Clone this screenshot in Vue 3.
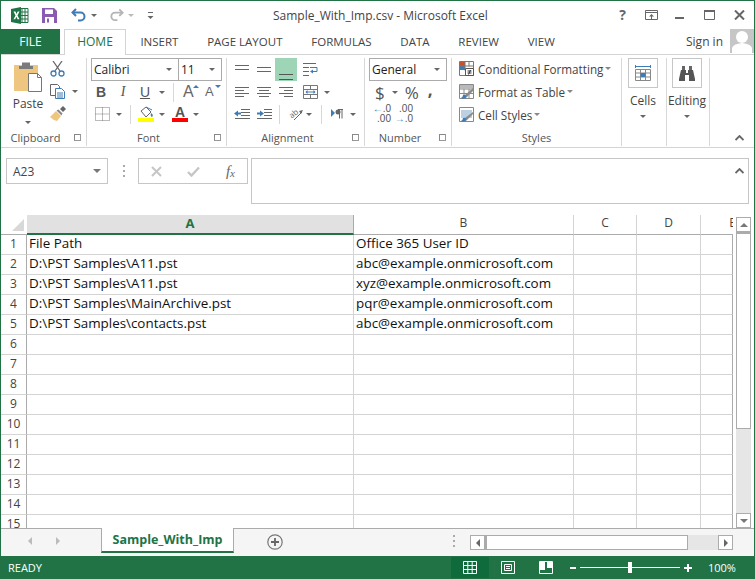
<script setup>
const tabs = ['INSERT', 'PAGE LAYOUT', 'FORMULAS', 'DATA', 'REVIEW', 'VIEW']
const columns = [
  { name: 'A', width: 327, active: true },
  { name: 'B', width: 220 },
  { name: 'C', width: 63 },
  { name: 'D', width: 64 },
  { name: 'E', width: 64 }
]
const data = [
  ['File Path', 'Office 365 User ID'],
  ['D:\\PST Samples\\A11.pst', 'abc@example.onmicrosoft.com'],
  ['D:\\PST Samples\\A11.pst', 'xyz@example.onmicrosoft.com'],
  ['D:\\PST Samples\\MainArchive.pst', 'pqr@example.onmicrosoft.com'],
  ['D:\\PST Samples\\contacts.pst', 'abc@example.onmicrosoft.com']
]
const rows = Array.from({ length: 15 }, (_, i) => ({ num: i + 1, cells: data[i] || ['', ''] }))
</script>

<template>
  <div class="window">
    <!-- title bar -->
    <div class="titlebar">
      <div class="qat">
        <svg class="qi" style="margin-left:10px" width="18" height="17" viewBox="0 0 18 17">
          <path d="M8 1.500h9v14H8z" fill="#fff" stroke="#217346"/>
          <path d="M11 1v15M14 1v15M8 5h9M8 8.500h9M8 12h9" stroke="#217346" fill="none"/>
          <path d="M0 2l10-2v17L0 15z" fill="#217346"/>
          <path d="M2.500 4.500h2l1 2.500 1.200-2.500h1.800L6.500 8.500l2 3.800H6.600L5.400 9.700 4.200 12.300H2.500l2-3.800z" fill="#fff"/>
        </svg>
        <svg class="qi" style="margin-left:13px" width="15" height="15" viewBox="0 0 15 15">
          <path d="M0 0h12l3 3v12H0z" fill="#8a5bb0"/>
          <path d="M3 1.500h8v4.500H3z" fill="#fff"/>
          <path d="M3 9h9v6H3z" fill="#fff"/>
          <path d="M5 10.500h2v4H5z" fill="#8a5bb0"/>
        </svg>
        <svg class="qi" style="margin-left:14px" width="16" height="14" viewBox="0 0 16 14">
          <path d="M5 1L1.500 4.500 5 8" fill="none" stroke="#3f7cb5" stroke-width="2"/>
          <path d="M2 4.500h7.500a4 4 0 0 1 0 8H7" fill="none" stroke="#3f7cb5" stroke-width="2"/>
        </svg>
        <span class="caret dark" style="margin-left:4px"></span>
        <svg class="qi" style="margin-left:12px" width="15" height="14" viewBox="0 0 16 14">
          <path d="M11 1l3.500 3.500L11 8" fill="none" stroke="#b4b4b4" stroke-width="2"/>
          <path d="M14 4.500H6.500a4 4 0 0 0 0 8H9" fill="none" stroke="#b4b4b4" stroke-width="2"/>
        </svg>
        <span class="caret light" style="margin-left:4px"></span>
        <svg class="qi" style="margin-left:13px" width="7" height="9" viewBox="0 0 7 9">
          <path d="M1 1.500h5" stroke="#666" fill="none"/>
          <path d="M0.500 5h6L3.500 8z" fill="#666"/>
        </svg>
      </div>
      <div class="doc-title">Sample_With_Imp.csv - Microsoft Excel</div>
      <div class="win-controls">
        <span class="help">?</span>
        <svg style="margin-right:-2px" width="13" height="10" viewBox="0 0 13 10">
          <path d="M.5.500h12v9H.5z" fill="none" stroke="#666"/>
          <path d="M.5 2.500h12" stroke="#666"/>
          <path d="M6.500 4L4 6.500h2V9h1V6.500h2z" fill="#666"/>
        </svg>
        <svg width="10" height="10" viewBox="0 0 10 10"><path d="M0 7h9v2H0z" fill="#666"/></svg>
        <svg width="11" height="10" viewBox="0 0 11 10"><path d="M.5 1.500h10v8H.5z" fill="none" stroke="#666"/><path d="M0 0h11v2H0z" fill="#666"/></svg>
        <svg width="11" height="10" viewBox="0 0 11 10"><path d="M1 .5l9 9M10 .5l-9 9" stroke="#666" stroke-width="2" fill="none"/></svg>
      </div>
    </div>

    <!-- tabs -->
    <div class="tabbar">
      <div class="file-tab">FILE</div>
      <div class="home-tab">HOME</div>
      <div class="tab" v-for="t in tabs" :key="t">{{ t }}</div>
      <div class="signin">Sign in</div>
      <div class="avatar">
        <svg width="24" height="24" viewBox="0 0 24 24">
          <circle cx="12" cy="8" r="6" fill="#fff"/>
          <path d="M2 24v-5q1-4 10-5q9 1 10 5v5z" fill="#fff"/>
        </svg>
      </div>
    </div>

    <!-- ribbon -->
    <div class="ribbon">
      <section class="group" style="width:86px">
        <div class="clip-body">
          <div class="paste">
            <svg width="30" height="31" viewBox="0 0 30 31">
              <path d="M1 4h24v26H1z" fill="#eec67f"/>
              <path d="M9 1.500h8V5h3v3H6V5h3z" fill="#7b7b7b"/>
              <path d="M15.500 12.500h9l4 4v14h-13z" fill="#fff" stroke="#777"/>
              <path d="M24.500 12.500v4h4" fill="none" stroke="#777"/>
            </svg>
            <div class="big-label">Paste</div>
            <span class="caret dark"></span>
          </div>
          <div class="clip-tools">
            <svg width="15" height="16" viewBox="0 0 15 16">
              <path d="M3 0l7 10M12 0L5 10" stroke="#666" fill="none" stroke-width="1.300"/>
              <circle cx="3.500" cy="12.500" r="2.500" fill="none" stroke="#3f7cb5" stroke-width="1.300"/>
              <circle cx="11.500" cy="12.500" r="2.500" fill="none" stroke="#3f7cb5" stroke-width="1.300"/>
            </svg>
            <div class="row-inline">
              <svg width="15" height="15" viewBox="0 0 15 15">
                <path d="M.5.500h7l2 2v9H.5z" fill="#fff" stroke="#666"/>
                <path d="M5.500 4.500h6l3 3v7h-9z" fill="#fff" stroke="#3f7cb5"/>
                <path d="M7 9h6M7 11h6M7 13h6" stroke="#3f7cb5"/>
              </svg>
              <span class="caret dark" style="margin-left:7px"></span>
            </div>
            <svg width="16" height="15" viewBox="0 0 16 15">
              <path d="M0 11l6-6 5 5-4 5q-4-1-7-4z" fill="#eec67f"/>
              <path d="M6.500 4.500l2-1 4 4-1 2z" fill="#888"/>
              <path d="M10 3l3-3 3 3-3 3z" fill="#666"/>
            </svg>
          </div>
        </div>
        <div class="group-label">Clipboard<span class="launcher"></span></div>
      </section>

      <section class="group" style="width:140px">
        <div class="font-body">
          <div class="combo-row">
            <div class="combo" style="width:88px">Calibri<span class="caret dark"></span></div>
            <div class="combo" style="width:44px;margin-left:-1px">11<span class="caret dark"></span></div>
          </div>
          <div class="tool-row">
            <b class="fmt" style="margin-left:4px;width:12px">B</b>
            <i class="fmt serif" style="margin-left:10px;width:12px">I</i>
            <u class="fmt" style="margin-left:10px;width:12px">U</u>
            <span class="caret dark" style="margin-left:8px"></span>
            <span class="vsep" style="margin-left:8px"></span>
            <span class="grow-a" style="margin-left:9px">A<span class="tri-up"></span></span>
            <span class="shrink-a" style="margin-left:10px">A<span class="tri-down"></span></span>
          </div>
          <div class="tool-row">
            <svg style="margin-left:4px" width="15" height="14" viewBox="0 0 15 14">
              <path d="M.5.500h14v13H.5zM7.500.500v13M.5 7h14" fill="none" stroke="#777" stroke-dasharray="1 1"/>
            </svg>
            <span class="caret dark" style="margin-left:6px"></span>
            <span class="vsep" style="margin-left:8px"></span>
            <div class="color-btn" style="margin-left:7px">
              <svg width="16" height="12" viewBox="0 0 16 12">
                <path d="M3 5l5-4 5 5-5 5z" fill="#fff" stroke="#666"/>
                <path d="M13 7q3 2 1 4q-2-1-1-4z" fill="#3f7cb5"/>
                <path d="M8 1l6 3" stroke="#3f7cb5"/>
              </svg>
              <span class="swatch" style="background:#ffff00"></span>
            </div>
            <span class="caret dark" style="margin-left:5px"></span>
            <div class="color-btn" style="margin-left:7px">
              <span class="font-a">A</span>
              <span class="swatch" style="background:#ff0000"></span>
            </div>
            <span class="caret dark" style="margin-left:5px"></span>
          </div>
        </div>
        <div class="group-label">Font<span class="launcher"></span></div>
      </section>

      <section class="group" style="width:138px">
        <div class="align-body">
          <div class="tool-row top">
            <svg style="margin-left:7px" width="16" height="12" viewBox="0 0 16 12"><path d="M1 1.500h14M1 5.500h14" stroke="#666"/></svg>
            <svg style="margin-left:6px" width="16" height="12" viewBox="0 0 16 12"><path d="M1 3.500h14M1 7.500h14" stroke="#666"/></svg>
            <span class="al-active"><svg width="16" height="12" viewBox="0 0 16 12"><path d="M1 5.500h14M1 10.500h14" stroke="#555"/></svg></span>
            <svg style="margin-left:5px" width="16" height="16" viewBox="0 0 16 16">
              <path d="M1 1.500h13M1 5.500h6M1 9.500h6M1 13.500h6" stroke="#666"/>
              <path d="M8 5.500h7v4h-5" fill="none" stroke="#3f7cb5"/>
              <path d="M11 7.500l-3 2 3 2z" fill="#3f7cb5"/>
            </svg>
          </div>
          <div class="tool-row">
            <svg style="margin-left:7px" width="16" height="13" viewBox="0 0 16 13"><path d="M1 1.500h14M1 4.500h9M1 7.500h14M1 10.500h9" stroke="#666"/></svg>
            <svg style="margin-left:6px" width="16" height="13" viewBox="0 0 16 13"><path d="M1 1.500h14M3 4.500h10M1 7.500h14M3 10.500h10" stroke="#666"/></svg>
            <svg style="margin-left:6px" width="16" height="13" viewBox="0 0 16 13"><path d="M1 1.500h14M6 4.500h9M1 7.500h14M6 10.500h9" stroke="#666"/></svg>
            <svg style="margin-left:9px" width="15" height="14" viewBox="0 0 15 14">
              <path d="M.5.500h14v13H.5zM.5 4.500h14M.5 9.500h14M7.500.500v4M7.500 9.500v4" fill="none" stroke="#777"/>
              <path d="M3 7h9" stroke="#3f7cb5"/>
              <path d="M4.500 5l-2 2 2 2zM10.500 5l2 2-2 2z" fill="#3f7cb5"/>
            </svg>
            <span class="caret dark" style="margin-left:6px"></span>
          </div>
          <div class="tool-row">
            <svg style="margin-left:7px" width="16" height="12" viewBox="0 0 16 12">
              <path d="M7 1.500h9M7 4.500h9M7 7.500h9M1 10.500h15" stroke="#666"/>
              <path d="M0 5.500L4 2.500v2h3v2H4v2z" fill="#3f7cb5"/>
            </svg>
            <svg style="margin-left:6px" width="16" height="12" viewBox="0 0 16 12">
              <path d="M8 1.500h8M8 4.500h8M8 7.500h8M1 10.500h15" stroke="#666"/>
              <path d="M8 5.500L4 2.500v2H1v2h3v2z" fill="#3f7cb5"/>
            </svg>
            <span class="vsep" style="margin-left:7px"></span>
            <svg style="margin-left:7px" width="17" height="15" viewBox="0 0 17 15">
              <text x="2" y="10" font-size="8" font-family="Open Sans" fill="#666" transform="rotate(-40 6 7)">ab</text>
              <path d="M7 13l8-8" stroke="#666"/>
              <path d="M16 3l-4 1 2 3z" fill="#666"/>
            </svg>
            <span class="caret dark" style="margin-left:2px"></span>
            <span class="vsep" style="margin-left:9px"></span>
            <svg style="margin-left:9px" width="13" height="12" viewBox="0 0 13 12">
              <path d="M0 1l4 4-4 4z" fill="#3f7cb5"/>
              <path d="M7 1.500h5M8.500 1.500v9M11 1.500v9" stroke="#666" fill="none"/>
              <circle cx="7" cy="4" r="2.500" fill="#666"/>
            </svg>
            <span class="caret dark" style="margin-left:6px"></span>
          </div>
        </div>
        <div class="group-label">Alignment<span class="launcher"></span></div>
      </section>

      <section class="group" style="width:87px">
        <div class="number-body">
          <div class="combo" style="width:78px">General<span class="caret dark"></span></div>
          <div class="tool-row num-row">
            <span class="big-sym" style="margin-left:6px">$</span>
            <span class="caret dark" style="margin-left:7px"></span>
            <span class="big-sym" style="margin-left:7px">%</span>
            <span class="big-sym comma" style="margin-left:9px">,</span>
          </div>
          <div class="tool-row dec-row">
            <div class="dec" style="margin-left:3px"><span><em class="arr">←</em>.0</span><span>.00</span></div>
            <div class="dec" style="margin-left:3px"><span>.00</span><span><em class="arr">→</em>.0</span></div>
          </div>
        </div>
        <div class="group-label">Number<span class="launcher"></span></div>
      </section>

      <section class="group" style="width:170px">
        <div class="styles-body">
          <div class="style-item">
            <svg width="15" height="15" viewBox="0 0 15 15">
              <path d="M.5.500h14v14H.5z" fill="#fff" stroke="#777"/>
              <path d="M1 1h5v4H1z" fill="#c8502c"/>
              <path d="M1 5h5v4H1z" fill="#3f7cb5"/>
              <path d="M6 .500v9M10 .500v5M.5 5h14" stroke="#777"/>
              <path d="M6.500 7.500h8v7h-8z" fill="#fff" stroke="#555"/>
              <path d="M8.500 10h4M8.500 12h4M11.500 9l-2 4.500" stroke="#333" fill="none"/>
            </svg>
            Conditional Formatting<span class="caret thin"></span>
          </div>
          <div class="style-item">
            <svg width="15" height="15" viewBox="0 0 15 15">
              <path d="M.5.500h14v14H.5zM.5 5h14M.5 9.500h14M5 .500v14M10 .500v14" fill="#fff" stroke="#888"/>
              <path d="M1 1h13v4H1z" fill="#b9b9b9"/>
              <path d="M14 4L6 11l2 2 6-6z" fill="#8a8a8a"/>
              <path d="M4 11q3-1 4 2q-3 3-6 1q2-1 2-3z" fill="#3f7cb5"/>
            </svg>
            Format as Table<span class="caret thin"></span>
          </div>
          <div class="style-item">
            <svg width="15" height="15" viewBox="0 0 15 15">
              <path d="M.5.500h14v14H.5z" fill="#fff" stroke="#888"/>
              <path d="M2 3h11v8H2z" fill="#bcd0e4"/>
              <path d="M14 5L6 11l2 2 6-6z" fill="#8a8a8a"/>
              <path d="M4 11q3-1 4 2q-3 3-6 1q2-1 2-3z" fill="#3f7cb5"/>
            </svg>
            Cell Styles<span class="caret thin"></span>
          </div>
        </div>
        <div class="group-label nolaunch">Styles</div>
      </section>

      <section class="group" style="width:45px">
        <div class="big-btn">
          <span class="big-box">
            <svg width="16" height="18" viewBox="0 0 16 18">
              <path d="M.5 1v3M15.500 1v3M.5 2.500h15" stroke="#3f7cb5"/>
              <path d="M.5 5.500h15v11H.5zM.5 9h15M.5 13h15M5.500 5.500v11M10.500 5.500v11" fill="#fff" stroke="#888"/>
              <path d="M5.500 9h5v4h-5z" fill="#3f7cb5"/>
            </svg>
          </span>
          <span class="big-label small">Cells</span>
          <span class="caret dark"></span>
        </div>
      </section>

      <section class="group" style="width:43px">
        <div class="big-btn">
          <span class="big-box">
            <svg width="16" height="15" viewBox="0 0 16 15">
              <path d="M3 0h3v4H3zM10 0h3v4h-3z" fill="#666"/>
              <path d="M2 4h5v3h2V4h5l2 9v2H10V9H6v6H0v-2z" fill="#555"/>
            </svg>
          </span>
          <span class="big-label small">Editing</span>
          <span class="caret dark"></span>
        </div>
      </section>

      <div class="collapse-col">
        <svg width="9" height="6" viewBox="0 0 9 6"><path d="M.5 5l4-4 4 4" fill="none" stroke="#666" stroke-width="1.800"/></svg>
      </div>
    </div>

    <!-- formula bar -->
    <div class="formula">
      <div class="namebox">A23<span class="caret dark wide"></span></div>
      <div class="dots"><i></i><i></i><i></i></div>
      <div class="fx-box">
        <svg width="11" height="11" viewBox="0 0 11 11"><path d="M1 1l9 9M10 1l-9 9" stroke="#c6c6c6" stroke-width="2"/></svg>
        <svg width="13" height="11" viewBox="0 0 13 11"><path d="M1 6l3.500 3.500L12 1.500" fill="none" stroke="#c6c6c6" stroke-width="2.400"/></svg>
        <span class="fx">f<sub>x</sub></span>
      </div>
      <div class="fbox">
        <svg width="9" height="6" viewBox="0 0 9 6"><path d="M.5 5l4-4 4 4" fill="none" stroke="#666" stroke-width="1.800"/></svg>
      </div>
    </div>

    <!-- sheet -->
    <div class="sheet-area">
      <div class="grid">
        <div class="head-row">
          <div class="corner"><span class="corner-tri"></span></div>
          <div
            v-for="c in columns"
            :key="c.name"
            class="col-head"
            :class="{ active: c.active }"
            :style="{ width: c.width + 'px' }"
          >{{ c.name }}</div>
        </div>
        <div class="body-row" v-for="r in rows" :key="r.num">
          <div class="row-num">{{ r.num }}</div>
          <div class="cell" style="width:327px">{{ r.cells[0] }}</div>
          <div class="cell" style="width:220px">{{ r.cells[1] }}</div>
          <div class="cell" style="width:63px"></div>
          <div class="cell" style="width:64px"></div>
          <div class="cell last" style="width:32px"></div>
        </div>
      </div>
      <div class="vscroll">
        <div class="sb-btn"><span class="tri t-up"></span></div>
        <div class="v-thumb"></div>
        <div class="v-track"></div>
        <div class="sb-btn"><span class="tri t-down"></span></div>
      </div>
    </div>

    <!-- sheet tabs -->
    <div class="sheetbar">
      <div class="nav"><span class="tri t-left grey"></span><span class="tri t-right grey"></span></div>
      <div class="sheet-tab">Sample_With_Imp</div>
      <svg class="add" width="16" height="16" viewBox="0 0 16 16">
        <circle cx="8" cy="8" r="7.200" fill="none" stroke="#777" stroke-width="1.200"/>
        <path d="M8 4v8M4 8h8" stroke="#666" stroke-width="1.800"/>
      </svg>
      <div class="dots small"><i></i><i></i><i></i></div>
      <div class="hscroll">
        <div class="sb-btn h"><span class="tri t-left"></span></div>
        <div class="h-thumb"></div>
        <div class="h-track"></div>
        <div class="sb-btn h"><span class="tri t-right"></span></div>
      </div>
    </div>

    <!-- status bar -->
    <div class="status">
      <span class="ready">READY</span>
      <div class="view-btn on">
        <svg width="14" height="13" viewBox="0 0 14 13"><path d="M.5.500h13v12H.5zM.5 4.500h13M.5 8.500h13M4.800.500v12M9.200.500v12" fill="none" stroke="#fff"/></svg>
      </div>
      <div class="view-btn">
        <svg width="14" height="13" viewBox="0 0 14 13"><path d="M.5.500h13v12H.5z" fill="none" stroke="#fff"/><path d="M3.500 3.500h7v6h-7zM5 5.500h4M5 7.500h4" fill="none" stroke="#fff"/></svg>
      </div>
      <div class="view-btn">
        <svg width="14" height="13" viewBox="0 0 14 13"><path d="M.5.500h13v12H.5z" fill="none" stroke="#fff"/><path d="M1 1h5v8H1zM8 1h5v6H8z" fill="#fff"/></svg>
      </div>
      <div class="zoom">
        <i class="zoom-minus"></i>
        <div class="zoom-line"><span class="zoom-thumb"></span></div>
        <svg width="8" height="8" viewBox="0 0 8 8"><path d="M4 0v8M0 4h8" stroke="#fff" stroke-width="2"/></svg>
      </div>
      <span class="percent">100%</span>
    </div>
  </div>
</template>

<style>
html, body { margin: 0; background: #fff; }
</style>

<style scoped>
.window {
  width: 755px;
  height: 579px;
  box-sizing: border-box;
  border: 1px solid #217346;
  border-bottom: 0;
  font-family: "Open Sans", "Liberation Sans", sans-serif;
  font-size: 12px;
  color: #444;
  background: #fff;
  display: flex;
  flex-direction: column;
  overflow: hidden;
}
svg { display: block; flex-shrink: 0; }

.caret {
  display: inline-block;
  width: 0;
  height: 0;
  border-left: 3px solid transparent;
  border-right: 3px solid transparent;
  border-top: 3px solid #666;
  flex-shrink: 0;
}
.caret.light { border-top-color: #bbb; }
.caret.thin { border-top-color: #888; }
.caret.wide { border-left-width: 4px; border-right-width: 4px; border-top-width: 4px; border-top-color: #777; }

/* title bar */
.titlebar { height: 28px; flex: none; display: flex; align-items: center; position: relative; }
.qat { display: flex; align-items: center; }
.doc-title {
  position: absolute;
  left: 272px;
  top: 7px;
  font-size: 12px;
  line-height: 16px;
  color: #444;
  white-space: nowrap;
}
.win-controls {
  margin-left: auto;
  display: flex;
  align-items: center;
  gap: 19px;
  padding-right: 9px;
}
.help { font-weight: 700; font-size: 14px; color: #666; line-height: 14px; }

/* tabs */
.tabbar { height: 25px; flex: none; display: flex; align-items: stretch; border-bottom: 1px solid #d4d4d4; line-height: 25px; }
.file-tab { width: 59px; background: #217346; color: #fff; text-align: center; }
.home-tab {
  width: 62px;
  margin-left: 4px;
  margin-bottom: -1px;
  box-sizing: border-box;
  background: #fff;
  color: #217346;
  text-align: center;
  border: 1px solid #d4d4d4;
  border-bottom: 0;
  position: relative;
  line-height: 24px;
}
.tab { padding: 0 14.4px; white-space: nowrap; font-size: 11.5px; }
.signin { margin-left: auto; padding-right: 7px; }
.avatar { width: 24px; height: 24px; background: #c6c6c6; overflow: hidden; }

/* ribbon */
.ribbon { height: 92px; flex: none; display: flex; border-bottom: 1px solid #d4d4d4; }
.group {
  box-sizing: border-box;
  display: flex;
  flex-direction: column;
  height: 88px;
  margin-top: 3px;
  border-right: 1px solid #d8d8d8;
  flex: none;
}
.group-label {
  margin-top: auto;
  height: 17px;
  line-height: 17px;
  text-align: center;
  font-size: 11px;
  color: #555;
  position: relative;
  padding-right: 16px;
}
.launcher {
  position: absolute;
  right: 5px;
  top: 5px;
  width: 5px;
  height: 5px;
  border-left: 1px solid #888;
  border-top: 1px solid #888;
  border-right: 1px solid #999;
  border-bottom: 1px solid #999;
}
.clip-body { display: flex; padding: 3px 0 0 12px; }
.paste { display: flex; flex-direction: column; align-items: center; width: 30px; }
.big-label { margin-top: 3px; line-height: 17px; font-size: 12px; margin-bottom: 9px; }
.clip-tools { display: flex; flex-direction: column; gap: 7px; margin-left: 7px; }
.row-inline { display: flex; align-items: center; }

.font-body { padding: 0 0 0 4px; }
.combo-row { display: flex; }
.combo {
  box-sizing: border-box;
  height: 23px;
  border: 1px solid #ababab;
  display: flex;
  align-items: center;
  justify-content: space-between;
  padding: 0 6px 0 2px;
  color: #222;
  font-size: 12px;
  background: #fff;
}
.tool-row { display: flex; align-items: center; height: 22px; }
.fmt { font-family: "Liberation Sans", sans-serif; font-size: 14px; color: #555; text-align: center; line-height: 14px; }
.serif { font-family: "Liberation Serif", serif; }
.vsep { width: 1px; height: 19px; background: #d8d8d8; flex-shrink: 0; }
.grow-a, .shrink-a { position: relative; color: #666; line-height: 14px; width: 12px; font-family: "Liberation Sans", sans-serif; }
.grow-a { font-size: 16px; }
.shrink-a { font-size: 13px; }
.tri-up, .tri-down { position: absolute; left: 10px; top: 0; border-left: 3px solid transparent; border-right: 3px solid transparent; }
.tri-up { border-bottom: 3px solid #3f7cb5; }
.tri-down { border-top: 3px solid #3f7cb5; }
.color-btn { display: flex; flex-direction: column; align-items: center; width: 16px; }
.swatch { display: block; width: 16px; height: 4px; }
.font-a { font-family: "Liberation Sans", sans-serif; font-size: 14px; line-height: 12px; height: 12px; color: #555; font-weight: 700; }

.align-body .top { height: 23px; }
.al-active {
  width: 22px;
  height: 23px;
  margin-left: 3px;
  background: #9fd5b7;
  display: flex;
  align-items: flex-end;
  justify-content: center;
}
.num-row { height: 23px; }
.dec-row { height: 20px; }
.number-body { padding-left: 4px; }
.big-sym { font-size: 17px; line-height: 18px; color: #555; }
.comma { font-weight: 700; margin-top: -6px; }
.dec { display: flex; flex-direction: column; font-size: 10px; line-height: 10px; color: #555; width: 19px; align-items: flex-end; font-family: "Liberation Sans", sans-serif; }
.arr { font-style: normal; color: #3f7cb5; font-size: 10px; }

.styles-body { padding: 0 0 0 7px; margin-top: -1px; }
.style-item { height: 23px; display: flex; align-items: center; gap: 4px; white-space: nowrap; font-size: 11.7px; }
.style-item .caret { margin-left: -2px; }
.nolaunch { padding-right: 0; }

.big-btn { display: flex; flex-direction: column; align-items: center; padding-right: 2px; }
.big-box {
  width: 30px;
  height: 30px;
  box-sizing: border-box;
  border: 1px solid #c6c6c6;
  display: flex;
  align-items: center;
  justify-content: center;
}
.big-label.small { margin-top: 4px; margin-bottom: 6px; }
.collapse-col { flex: 1; display: flex; align-items: flex-end; justify-content: flex-end; padding: 0 10px 6px 0; }

/* formula bar */
.formula { flex: none; height: 67px; display: flex; padding-top: 10px; box-sizing: border-box; }
.namebox {
  box-sizing: border-box;
  width: 102px;
  height: 26px;
  margin-left: 5px;
  border: 1px solid #c6c6c6;
  display: flex;
  align-items: center;
  justify-content: space-between;
  padding: 0 6px;
  font-size: 12px;
  color: #444;
}
.dots { display: flex; flex-direction: column; gap: 3px; margin: 7px 0 0 15px; width: 15px; }
.dots i { width: 2px; height: 2px; background: #aaa; display: block; }
.fx-box {
  box-sizing: border-box;
  width: 110px;
  height: 26px;
  border: 1px solid #c6c6c6;
  display: flex;
  align-items: center;
  padding: 0 12px 0 12px;
  justify-content: space-between;
}
.fx { font-family: "Liberation Serif", serif; font-style: italic; font-size: 15px; color: #666; line-height: 14px; }
.fx sub { font-size: 11px; vertical-align: -1px; line-height: 0; }
.fbox {
  box-sizing: border-box;
  width: 498px;
  height: 46px;
  margin-left: 3px;
  border: 1px solid #c6c6c6;
  display: flex;
  justify-content: flex-end;
  padding: 9px 4px 0 0;
}

/* sheet */
.sheet-area { flex: 1; min-height: 0; display: flex; overflow: hidden; }
.grid { width: 732px; flex: none; overflow: hidden; }
.head-row { display: flex; height: 20px; }
.corner { width: 26px; flex: none; border-bottom: 1px solid #ababab; box-sizing: border-box; position: relative; height: 20px; }
.corner-tri {
  position: absolute;
  right: 3px;
  bottom: 3px;
  border-left: 12px solid transparent;
  border-bottom: 12px solid #d8d8d8;
}
.col-head {
  box-sizing: border-box;
  height: 20px;
  flex: none;
  border-right: 1px solid #d4d4d4;
  border-bottom: 1px solid #ababab;
  text-align: center;
  line-height: 16px;
  font-size: 12px;
  color: #444;
  overflow: hidden;
}
.col-head.active {
  background: #e1e1e1;
  color: #217346;
  font-weight: 700;
  font-size: 13px;
  border-right-color: #ababab;
  border-bottom: 2px solid #217346;
}
.body-row { display: flex; height: 20px; }
.row-num {
  box-sizing: border-box;
  width: 26px;
  flex: none;
  text-align: center;
  line-height: 18px;
  font-size: 12px;
  color: #444;
  border-right: 1px solid #ababab;
  border-bottom: 1px solid #d4d4d4;
}
.cell {
  box-sizing: border-box;
  flex: none;
  height: 20px;
  border-right: 1px solid #d4d4d4;
  border-bottom: 1px solid #d4d4d4;
  padding-left: 2px;
  line-height: 16px;
  font-size: 13.4px;
  color: #111;
  white-space: nowrap;
  overflow: hidden;
}
.cell.last { border-right-color: #ababab; }

.vscroll {
  width: 16px;
  margin: 2px 0 0 3px;
  flex: none;
  display: flex;
  flex-direction: column;
  background: #fff;
}
.sb-btn {
  box-sizing: border-box;
  width: 15px;
  height: 15px;
  border: 1px solid #ababab;
  background: #fff;
  display: flex;
  align-items: center;
  justify-content: center;
  flex: none;
}
.v-thumb { flex: none; height: 197px; border: 1px solid #ababab; border-top-width: 2px; box-sizing: border-box; width: 15px; background: #fff; }
.v-track { flex: 1; width: 15px; background: #e6e6e6; }
.tri { display: block; width: 0; height: 0; border: 0 solid transparent; }
.t-up { border-width: 0 4px 4px; border-bottom-color: #777; }
.t-down { border-width: 4px 4px 0; border-top-color: #777; }
.t-left { border-width: 4px 4px 4px 0; border-right-color: #666; }
.t-right { border-width: 4px 0 4px 4px; border-left-color: #666; }
.grey.t-left { border-right-color: #bbb; }
.grey.t-right { border-left-color: #bbb; }

/* sheet tabs */
.sheetbar {
  flex: none;
  height: 28px;
  box-sizing: border-box;
  border-top: 1px solid #ababab;
  background: #f5f5f5;
  display: flex;
  align-items: flex-start;
}
.nav { width: 100px; display: flex; gap: 24px; padding: 8px 0 0 27px; box-sizing: border-box; flex: none; }
.sheet-tab {
  box-sizing: border-box;
  width: 133px;
  height: 25px;
  margin-top: -1px;
  background: #fff;
  border-left: 1px solid #ababab;
  border-right: 1px solid #ababab;
  border-bottom: 2px solid #217346;
  color: #217346;
  font-weight: 700;
  font-size: 12.5px;
  line-height: 24px;
  text-align: center;
}
.add { margin: 5px 0 0 33px; }
.dots.small { margin: 6px 0 0 170px; width: 17px; flex: none; }
.hscroll { display: flex; margin-top: 6px; }
.sb-btn.h { height: 15px; }
.h-thumb { width: 203px; height: 15px; box-sizing: border-box; border: 1px solid #ababab; border-left: 2px solid #ababab; background: #fff; }
.h-track { width: 30px; height: 15px; background: #e6e6e6; }

/* status bar */
.status {
  flex: none;
  height: 23px;
  background: #217346;
  margin: 0 -1px;
  color: #fff;
  display: flex;
  align-items: center;
  font-size: 11px;
}
.ready { margin-left: 8px; width: 443px; flex: none; }
.view-btn { width: 38px; height: 21px; display: flex; align-items: center; justify-content: center; flex: none; }
.view-btn.on { background: #0f6a3c; }
.zoom { display: flex; align-items: center; margin-left: 5px; }
.zoom-minus { display: block; width: 6px; height: 2px; background: #fff; margin-right: 4px; }
.zoom-line { width: 100px; height: 1px; background: #fff; position: relative; margin-right: 4px; }
.zoom-thumb { position: absolute; left: 48px; top: -5px; width: 4px; height: 11px; background: #fff; }
.percent { margin-left: 16px; font-size: 11px; }
</style>
